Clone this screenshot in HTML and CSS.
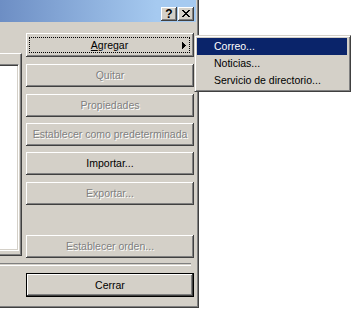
FILE: index.html
```html
<!DOCTYPE html>
<html lang="es">
<head>
  <meta charset="UTF-8">
  <title>Cuentas de Internet</title>
  <link rel="stylesheet" href="styles.css">
</head>
<body>
  <div class="dialog">
    <div class="titlebar">
      <span class="cap-btn cap-help">?</span>
      <span class="cap-btn cap-close">
        <svg width="8" height="7" viewBox="0 0 8 7" shape-rendering="crispEdges"><path d="M0 0h2v1h-2zM6 0h2v1h-2zM1 1h2v1h-2zM5 1h2v1h-2zM2 2h4v1h-4zM3 3h2v1h-2zM2 4h4v1h-4zM1 5h2v1h-2zM5 5h2v1h-2zM0 6h2v1h-2zM6 6h2v1h-2z" fill="#000"/></svg>
      </span>
    </div>
    <div class="client">
      <div class="main">
        <div class="tabpanel">
          <div class="listview"></div>
        </div>
        <div class="actions">
          <div class="btn btn-focus"><span class="focus"><span><u>A</u>gregar</span>
            <svg class="arrow" width="4" height="7" viewBox="0 0 4 7" shape-rendering="crispEdges"><path d="M0 0h1v7h-1zM1 1h1v5h-1zM2 2h1v3h-1zM3 3h1v1h-1z" fill="#000"/></svg></span></div>
          <div class="btn disabled step">Quitar</div>
          <div class="btn disabled step">Propiedades</div>
          <div class="btn disabled">Establecer como predeterminada</div>
          <div class="btn">Importar...</div>
          <div class="btn disabled step">Exportar...</div>
          <div class="btn disabled btn-order">Establecer orden...</div>
        </div>
      </div>
      <div class="separator"></div>
      <div class="footer">
        <div class="btn btn-default">Cerrar</div>
      </div>
    </div>
  </div>

  <div class="menu">
    <div class="menu-item active">Correo...</div>
    <div class="menu-item">Noticias...</div>
    <div class="menu-item">Servicio de directorio...</div>
  </div>
</body>
</html>
```

FILE: styles.css
```css
body {
  margin: 0;
  width: 351px;
  height: 310px;
  background: #fff;
  font-family: "Liberation Sans", Arial, sans-serif;
  font-size: 10.5px;
  color: #000;
  position: relative;
  overflow: hidden;
}
.dialog {
  width: 199px;
  height: 308px;
  box-sizing: border-box;
  background: #d4d0c8;
  border-right: 1px solid #404040;
  border-bottom: 1px solid #404040;
  box-shadow: inset -1px -1px 0 #808080;
  padding-right: 2px;
}
.titlebar {
  height: 22px;
  background: linear-gradient(to right, #6d8ec4, #a6caf0 80%);
  display: flex;
  justify-content: flex-end;
  align-items: flex-start;
  padding-top: 7px;
  padding-right: 2px;
  box-sizing: border-box;
}
.cap-btn {
  width: 16px;
  height: 14px;
  box-sizing: border-box;
  background: #d4d0c8;
  box-shadow: inset -1px -1px 0 #404040, inset 1px 1px 0 #fff, inset -2px -2px 0 #808080;
  display: flex;
  align-items: center;
  justify-content: center;
  font-weight: bold;
  font-size: 12px;
  line-height: 14px;
}
.cap-help {
  margin-right: 1px;
  padding-bottom: 1px;
}
.cap-close svg {
  margin: 0 1px 1px 0;
}
.client {
  display: flex;
  flex-direction: column;
}
.main {
  height: 241px;
  display: flex;
  align-items: flex-start;
}
.tabpanel {
  width: 22px;
  height: 203px;
  margin-top: 31px;
  box-sizing: border-box;
  border-top: 1px solid #fff;
  border-right: 1px solid #404040;
  border-bottom: 1px solid #404040;
  box-shadow: inset -1px -1px 0 #808080;
  padding: 10px 2px 3px 0;
}
.listview {
  height: 187px;
  box-sizing: border-box;
  background: #fff;
  border-top: 1px solid #808080;
  border-right: 1px solid #fff;
  border-bottom: 1px solid #fff;
  box-shadow: inset 0 1px 0 #404040, inset -1px -1px 0 #d4d0c8;
}
.actions {
  margin-left: 4px;
  margin-top: 11px;
  width: 168px;
  display: flex;
  flex-direction: column;
  gap: 6px;
}
.btn {
  height: 23px;
  box-sizing: border-box;
  background: #d4d0c8;
  box-shadow: inset -1px -1px 0 #404040, inset 1px 1px 0 #fff, inset -2px -2px 0 #808080;
  display: flex;
  align-items: center;
  justify-content: center;
  padding-bottom: 1px;
  white-space: nowrap;
}
.step {
  margin-top: 1px;
}
.disabled {
  color: #808080;
  text-shadow: 1px 1px 0 #fff;
}
.btn-focus {
  height: 24px;
  padding: 4px 4px 4px 3px;
}
.focus {
  flex: 1;
  align-self: stretch;
  border: 1px dotted #000;
  display: flex;
  align-items: center;
  justify-content: center;
  position: relative;
}
.arrow {
  position: absolute;
  right: 3px;
  top: 4px;
}
.btn-order {
  margin-top: 24px;
}
.separator {
  width: 191px;
  height: 1px;
  border-top: 1px solid #808080;
  border-bottom: 1px solid #fff;
}
.footer {
  padding: 7px 0 0 26px;
}
.btn-default {
  width: 168px;
  height: 24px;
  border: 1px solid #000;
}
.menu {
  position: absolute;
  left: 194px;
  top: 35px;
  width: 157px;
  box-sizing: border-box;
  background: #d4d0c8;
  border-top: 1px solid #d4d0c8;
  border-left: 1px solid #d4d0c8;
  border-right: 1px solid #404040;
  border-bottom: 1px solid #404040;
  box-shadow: inset 1px 1px 0 #fff, inset -1px -1px 0 #808080;
  padding: 2px 3px 2px 2px;
}
.menu-item {
  height: 17px;
  line-height: 17px;
  padding-left: 17px;
}
.menu-item.active {
  background: #0a246a;
  color: #fff;
}
```
